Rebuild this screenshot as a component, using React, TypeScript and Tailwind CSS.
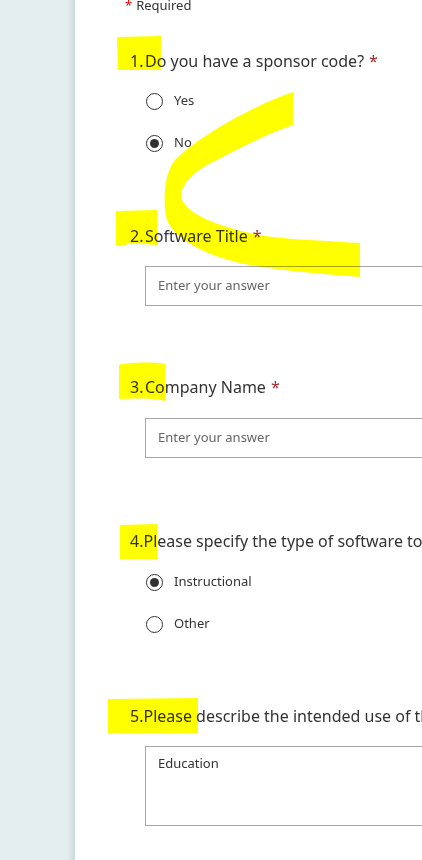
const font = { fontFamily: '"Noto Sans", "Open Sans", sans-serif' }

function Radio({ label, checked }: { label: string; checked?: boolean }) {
  return (
    <label className="flex items-center gap-[11px] h-[20px]">
      <span className="w-[17px] h-[17px] rounded-full border-[1.5px] border-[#333] flex items-center justify-center">
        {checked && <span className="w-[9px] h-[9px] rounded-full bg-[#333]" />}
      </span>
      <span className="text-[13px] text-[#333]">{label}</span>
    </label>
  )
}

function Title({ n, text, required }: { n: number; text: string; required?: boolean }) {
  return (
    <div className="flex items-baseline text-[16px] text-[#333] whitespace-nowrap leading-[22px]">
      <span className="w-[15px]">{n}.</span>
      <span>
        {text}
        {required && <span className="text-[#a4262c] ml-[5px]">*</span>}
      </span>
    </div>
  )
}

function TextBox({ value, tall }: { value: string; tall?: boolean }) {
  return (
    <div
      className={`ml-[15px] border border-[#a6a6a6] bg-white w-[400px] px-[12px] text-[13px] ${
        tall ? 'h-[80px] pt-[7px] text-[#333]' : 'h-[40px] flex items-center text-[#666]'
      }`}
    >
      {value}
    </div>
  )
}

function Marks() {
  return (
    <svg
      className="absolute inset-0 pointer-events-none mix-blend-multiply"
      width="422"
      height="860"
      viewBox="0 0 422 860"
    >
      <g fill="#ffff00">
        <path d="M117,37 L161,36 L161,70 L118,70 Z" />
        <path d="M116,211 L157,210 L158,245 L127,243 L126,246 L116,245 Z" />
        <path d="M293,92 C255,105 200,135 175,160 C163,175 163,205 167,220 C175,240 210,258 250,265 C290,272 330,274 360,277 L360,243 C320,240 280,240 250,233 C215,225 190,215 182,200 C178,185 195,170 217,160 C245,145 270,133 293,125 Z" />
        <path d="M119,365 C130,362 155,362 165,364 L166,401 C155,398 135,398 119,399 Z" />
        <path d="M120,525 L157,524 L157,559 L120,559 Z" />
        <path d="M108,699 L198,698 L198,733 L108,733 Z" />
      </g>
    </svg>
  )
}

export default function App() {
  return (
    <div className="relative w-[422px] h-[860px] flex overflow-hidden" style={font}>
      <aside className="w-[75px] shrink-0 bg-[#e4eef1] relative">
        <div className="absolute right-0 top-0 bottom-0 w-[8px] bg-gradient-to-r from-transparent to-[#cbdadd]" />
      </aside>
      <main className="flex-1 bg-white pl-[55px] pt-0 min-w-0">
        <div className="-mt-[4px] flex items-center gap-[4px] text-[13px] text-[#333] h-[20px]">
          <span className="text-[#e00] ml-[-5px]">*</span>
          <span>Required</span>
        </div>

        <div className="mt-[34px]">
          <Title n={1} text="Do you have a sponsor code?" required />
          <div className="ml-[16px] mt-[19px] flex flex-col gap-[22px]">
            <Radio label="Yes" />
            <Radio label="No" checked />
          </div>
        </div>

        <div className="mt-[72px]">
          <Title n={2} text="Software Title" required />
          <div className="mt-[19px]">
            <TextBox value="Enter your answer" />
          </div>
        </div>

        <div className="mt-[70px]">
          <Title n={3} text="Company Name" required />
          <div className="mt-[20px]">
            <TextBox value="Enter your answer" />
          </div>
        </div>

        <div className="mt-[72px]">
          <Title n={4} text="Please specify the type of software to be used" required />
          <div className="ml-[16px] mt-[20px] flex flex-col gap-[22px]">
            <Radio label="Instructional" checked />
            <Radio label="Other" />
          </div>
        </div>

        <div className="mt-[71px]">
          <Title n={5} text="Please describe the intended use of the software" required />
          <div className="mt-[19px]">
            <TextBox value="Education" tall />
          </div>
        </div>
      </main>
      <Marks />
    </div>
  )
}
